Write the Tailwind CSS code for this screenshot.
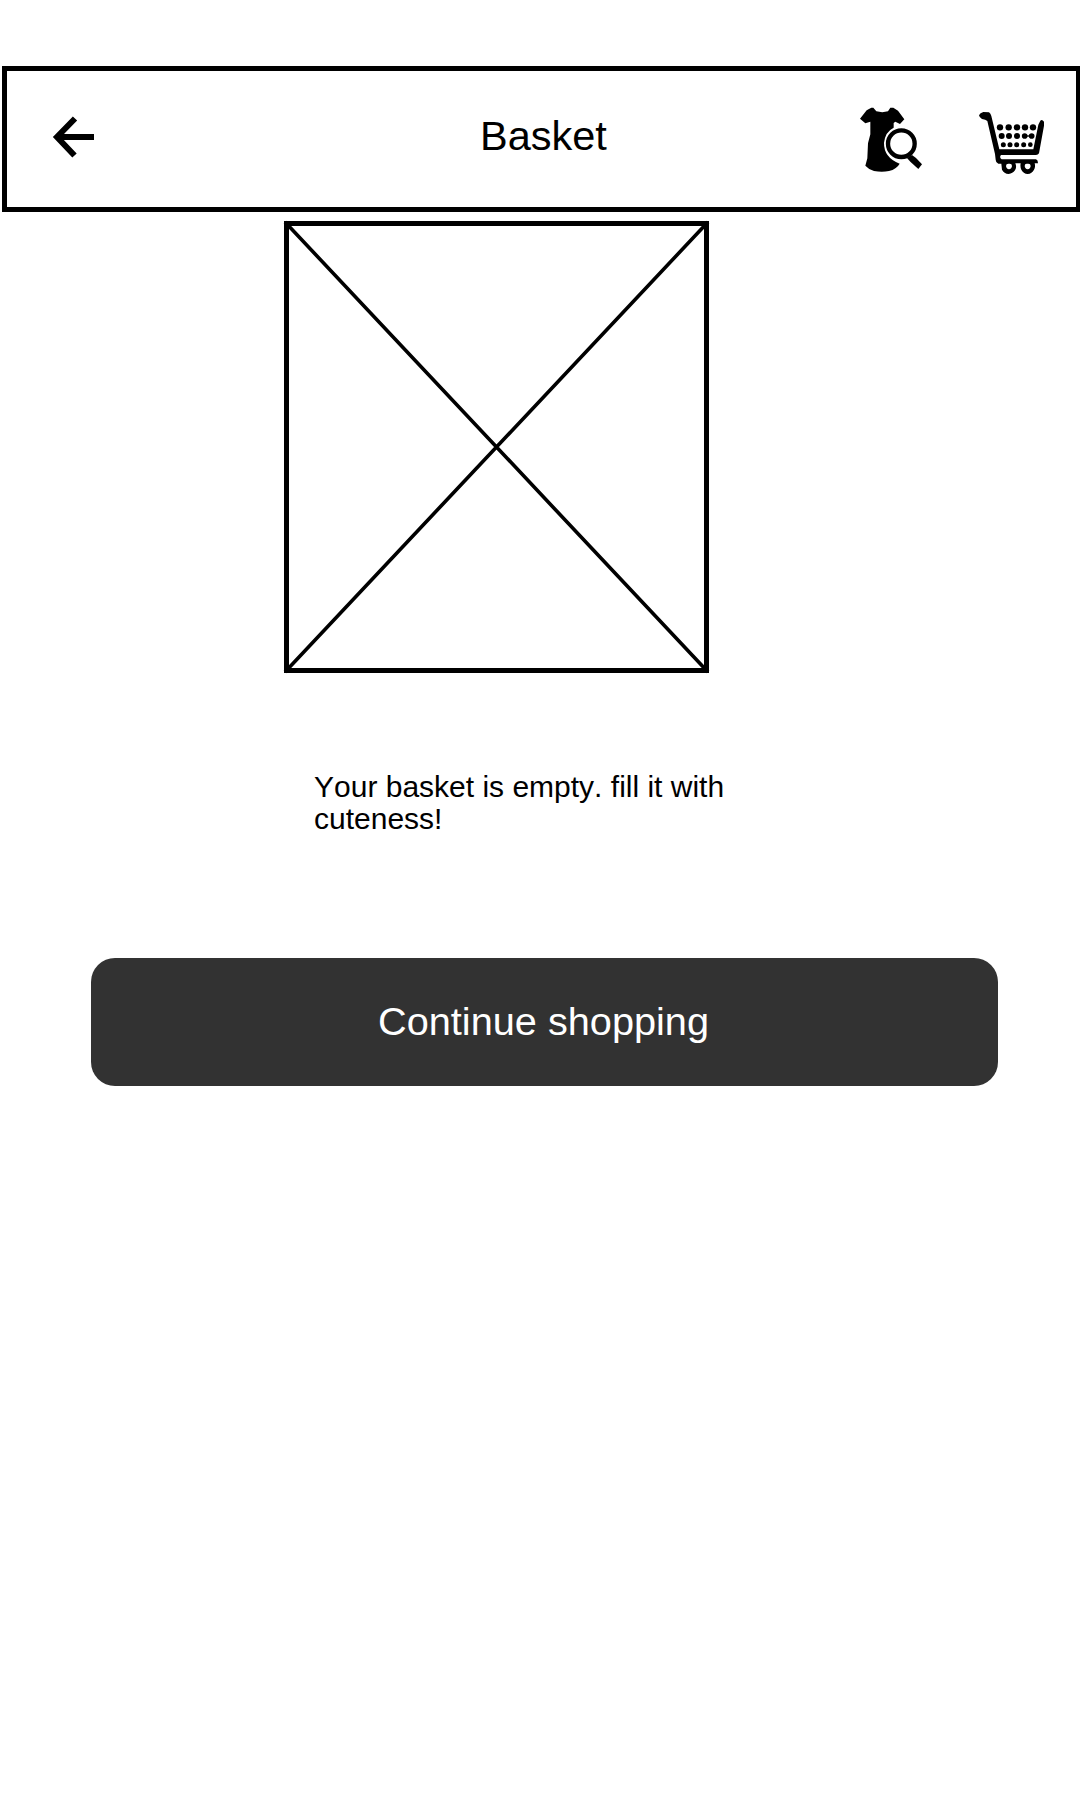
<!DOCTYPE html>
<html lang="en">
<head>
<meta charset="utf-8">
<title>Basket</title>
<script src="https://cdn.jsdelivr.net/npm/@tailwindcss/browser@4"></script>
</head>
<body class="bg-white text-black font-['Liberation_Sans',Arial,sans-serif] h-[1800px] overflow-hidden flex flex-col pt-[66px]">
  <header class="ml-[2px] h-[146px] shrink-0 border-[5px] border-r-4 border-black flex items-start">
    <button class="ml-[45px] mt-[44px] w-[44px] h-[44px]" aria-label="Back">
      <svg class="block" width="44" height="44" viewBox="52 115 44 44" fill="none" stroke="#000" stroke-width="6"><path d="M94 137H59M75 118.500L57 137L74.500 155.500"/></svg>
    </button>
    <h1 class="ml-[384px] mt-[41px] w-[128px] text-[41.5px] leading-[48px]">Basket</h1>
    <button class="ml-[242px] mt-[24px] w-[85px] h-[90px]" aria-label="Search clothes">
      <svg class="block" width="85" height="90" viewBox="0 0 255 270">
        <path d="M64 38H70L79 49Q97 54 114 49L121 38H130L144 47L163 73L150 87L136 80L131 84V98Q106 110 102 143Q101 187 149 206Q140 222 117 228Q96 233 72 228Q58 225 46 212L52 190L54 145L61 118V80L46 85L30 71L50 46Z"/>
        <circle cx="154" cy="146" r="40" fill="none" stroke="#000" stroke-width="13"/>
        <path d="M171 189L186 180L198 189L216 208L205 222L181 200Z"/>
      </svg>
    </button>
    <button class="ml-[35px] mt-[29px] w-[85px] h-[85px]" aria-label="Basket">
      <svg class="block" width="85" height="85" viewBox="0 0 255 255">
        <path d="M27 46Q30 38 40 36L57 37Q62 40 64 48L88 148H190L205 74L211 62Q216 57 222 65V77L207 160Q204 165 198 165H93Q87 172 95 178H198Q204 180 204 190H194Q197 201 192 209Q186 221 173 222Q160 221 154 209Q150 201 152 190H136Q141 202 135 211Q128 221 116 222Q102 221 96 209L94 191H85Q77 188 77 179L75 162L52 63Q47 59 36 57Q28 53 27 46Z"/>
        <path d="M108 198Q108 191 115 191H119Q126 191 126 198Q125 207 117 208Q109 207 108 198ZM164 198Q164 191 170 191H175Q182 191 182 198Q181 207 173 208Q165 207 164 198Z" fill="#fff"/>
        <g><circle cx="90" cy="82" r="9.500"/><circle cx="116" cy="82" r="9.500"/><circle cx="141" cy="82" r="9.500"/><circle cx="165" cy="82" r="9.500"/><circle cx="189" cy="82" r="9.500"/>
        <circle cx="95" cy="108" r="9"/><circle cx="117" cy="108" r="9"/><circle cx="141" cy="108" r="9"/><circle cx="164" cy="108" r="8.500"/><circle cx="185" cy="108" r="8.500"/><path d="M164 106H185V110H164Z"/>
        <circle cx="100" cy="134" r="7.500"/><circle cx="120" cy="134" r="7.500"/><circle cx="140" cy="134" r="7.500"/><circle cx="161" cy="134" r="7.500"/><circle cx="181" cy="134" r="7"/></g>
      </svg>
    </button>
  </header>
  <main class="flex flex-col items-start">
    <svg class="block ml-[283px] mt-[8px]" width="428" height="455" viewBox="283 220 428 455" fill="none" stroke="#000">
      <rect x="286.500" y="223.500" width="420" height="447" stroke-width="5"/>
      <path d="M285 222L708 672M708 222L285 672" stroke-width="3.600"/>
    </svg>
    <p class="ml-[314px] mt-[96px] w-[430px] text-[30px] leading-8 [font-kerning:none]">Your basket is empty. fill it with<br>cuteness!</p>
    <button class="ml-[91px] mt-[123px] w-[907px] h-[128px] rounded-[24px] bg-[#323232] text-white text-[39.7px] leading-[46px] pb-[2px] pr-[2px]">Continue shopping</button>
  </main>
</body>
</html>
